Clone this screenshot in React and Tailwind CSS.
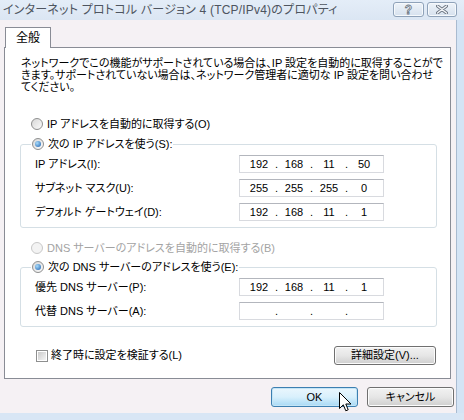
import { useState } from 'react'

const FONT = "font-['Liberation_Sans','Noto_Sans_CJK_JP',sans-serif] [font-feature-settings:'palt']"

function Radio({ checked, disabled }) {
  return (
    <span
      className={`flex h-[12px] w-[12px] shrink-0 items-center justify-center rounded-full border ${
        disabled
          ? 'border-[#c8c8c8] bg-[#f3f3f3]'
          : 'border-[#8e8f8f] bg-gradient-to-br from-[#d8d8d8] to-[#fbfbfb]'
      }`}
    >
      {checked ? (
        <span className="h-[6px] w-[6px] rounded-full bg-[radial-gradient(circle_at_35%_35%,#a8dcfb,#1d5fae)]" />
      ) : null}
    </span>
  )
}

function RadioRow({ label, checked, disabled }) {
  return (
    <div className="flex h-[16px] items-center gap-[4px]">
      <Radio checked={checked} disabled={disabled} />
      <span className={disabled ? 'text-[#a3a3a3]' : 'text-black'}>{label}</span>
    </div>
  )
}

function IpField({ parts }) {
  return (
    <div className="flex h-[18px] w-[145px] items-center border border-[#d8dadf] border-t-[#b3b6bd] bg-white px-[4px] font-['Liberation_Sans',sans-serif] text-[11px] text-black">
      {parts.map((part, index) => (
        <div key={index} className="flex items-center">
          <span className="w-[30px] text-center">{part}</span>
          {index < 3 ? <span className="w-[5px] text-center">.</span> : null}
        </div>
      ))}
    </div>
  )
}

function FieldRow({ label, parts }) {
  return (
    <div className="flex h-[18px] items-center">
      <span className="w-[204px]">{label}</span>
      <IpField parts={parts} />
    </div>
  )
}

function GroupBox({ legend, children }) {
  return (
    <fieldset className="w-[417px] rounded-[3px] border border-[#d5dfe5] px-[14px] pb-[6px]">
      <legend className="ml-[-4px] flex h-[16px] items-center bg-white px-[1px]">
        <RadioRow label={legend} checked />
      </legend>
      <div className="flex flex-col gap-[6px] pt-[3px]">{children}</div>
    </fieldset>
  )
}

function Button({ children, focused, className = '' }) {
  return (
    <button
      type="button"
      className={`flex items-center justify-center rounded-[3px] border text-[11px] text-black ${
        focused
          ? 'border-[#3c7fb1] bg-gradient-to-b from-[#eaf6fd] via-[#d9f0fc] to-[#a7d9f5] shadow-[inset_0_0_0_1px_#c4e5f6]'
          : 'border-[#707070] bg-gradient-to-b from-[#f2f2f2] via-[#e6e6e6] to-[#cfcfcf] shadow-[inset_0_0_0_1px_#fcfcfc]'
      } ${className}`}
    >
      {children}
    </button>
  )
}

function TitleBar() {
  return (
    <div className="flex h-[20px] items-center justify-between bg-gradient-to-b from-[#e4edf8] to-[#dbe6f3] pl-[3px] pr-[7px]">
      <span className="whitespace-nowrap text-[12px] tracking-[0.2px] text-[#4e5560]">
        インターネット プロトコル バージョン 4 (TCP/IPv4)のプロパティ
      </span>
      <div className="flex items-center gap-[3px] self-start pt-[2px]">
        <div className="flex h-[15px] w-[31px] items-center justify-center rounded-[3px] border border-[#8fa2b9] bg-gradient-to-b from-[#eef3f9] to-[#d6e1ee] shadow-[inset_0_0_0_1px_#f6f9fc]">
          <span className="text-[12px] font-bold leading-none text-[#f4f6f9] [-webkit-text-stroke:0.8px_#6b7582]">?</span>
        </div>
        <div className="flex h-[15px] w-[30px] items-center justify-center rounded-[3px] border border-[#8fa2b9] bg-gradient-to-b from-[#eef3f9] to-[#d6e1ee] shadow-[inset_0_0_0_1px_#f6f9fc]">
          <svg width="12" height="9" viewBox="0 0 12 9">
            <path d="M1.5 1 L10.5 8 M10.5 1 L1.5 8" stroke="#6b7582" strokeWidth="3.2" strokeLinecap="round" />
            <path d="M1.5 1 L10.5 8 M10.5 1 L1.5 8" stroke="#f4f6f9" strokeWidth="1.4" strokeLinecap="round" />
          </svg>
        </div>
      </div>
    </div>
  )
}

function Cursor() {
  return (
    <svg className="absolute left-[68px] top-[5px]" width="13" height="21" viewBox="0 0 13 21">
      <path
        d="M0.5 0.5 L0.5 16.5 L4.3 12.8 L6.8 18.8 L9.2 17.8 L6.8 12 L12 12 Z"
        fill="#ffffff"
        stroke="#000000"
        strokeWidth="1"
        strokeLinejoin="round"
      />
    </svg>
  )
}

export default function App() {
  const [verify] = useState(false)

  return (
    <div className={`flex h-[420px] w-[464px] flex-col bg-[#d8e6f5] text-[11px] ${FONT}`}>
      <TitleBar />
      <div className="flex flex-1">
        <div className="flex w-[456px] flex-col bg-[#f5f1f4] pl-[4px] pt-[7px]">
          <div className="relative z-10 -mb-px ml-[1px] flex h-[21px] w-[46px] items-center justify-center border border-b-0 border-[#898c95] bg-white pb-[1px] text-[12px]">
            全般
          </div>
          <div className="flex h-[332px] w-[447px] flex-col border border-[#898c95] bg-white pl-[16px]">
            <div className="mt-[9px] flex flex-col whitespace-nowrap">
              <span className="h-[12px] leading-[12px]">ネットワークでこの機能がサポートされている場合は、IP 設定を自動的に取得することがで</span>
              <span className="h-[12px] leading-[12px]">きます。サポートされていない場合は、ネットワーク管理者に適切な IP 設定を問い合わせ</span>
              <span className="h-[12px] leading-[12px]">てください。</span>
            </div>

            <div className="mt-[23px] pl-[10px]">
              <RadioRow label="IP アドレスを自動的に取得する(O)" />
            </div>

            <div className="mt-[4px] -ml-[1px]">
              <GroupBox legend="次の IP アドレスを使う(S):">
                <FieldRow label="IP アドレス(I):" parts={['192', '168', '11', '50']} />
                <FieldRow label="サブネット マスク(U):" parts={['255', '255', '255', '0']} />
                <FieldRow label="デフォルト ゲートウェイ(D):" parts={['192', '168', '11', '1']} />
              </GroupBox>
            </div>

            <div className="mt-[12px] pl-[10px]">
              <RadioRow label="DNS サーバーのアドレスを自動的に取得する(B)" disabled />
            </div>

            <div className="mt-[3px] -ml-[1px]">
              <GroupBox legend="次の DNS サーバーのアドレスを使う(E):">
                <FieldRow label="優先 DNS サーバー(P):" parts={['192', '168', '11', '1']} />
                <FieldRow label="代替 DNS サーバー(A):" parts={['', '', '', '']} />
              </GroupBox>
            </div>

            <div className="mt-[19px] flex items-center justify-between pl-[15px] pr-[14px]">
              <div className="flex items-center gap-[3px]">
                <span className="flex h-[12px] w-[12px] items-center justify-center border border-[#8e8f8f] bg-white">
                  <span className="h-[8px] w-[8px] bg-gradient-to-br from-[#cbcbcb] to-[#f4f4f4]">
                    {verify ? '✓' : null}
                  </span>
                </span>
                <span>終了時に設定を検証する(L)</span>
              </div>
              <Button className="h-[19px] w-[102px]">詳細設定(V)...</Button>
            </div>
          </div>

          <div className="mt-[8px] flex justify-end gap-[9px] pr-[2px]">
            <div className="relative">
              <Button focused className="h-[20px] w-[87px]">OK</Button>
              <Cursor />
            </div>
            <Button className="h-[20px] w-[87px]">キャンセル</Button>
          </div>
        </div>
        <div className="flex-1 border-l border-[#a9bbd0] bg-[#d4e4f5]" />
      </div>
      <div className="h-[7px] bg-[#d8e6f5]" />
    </div>
  )
}
